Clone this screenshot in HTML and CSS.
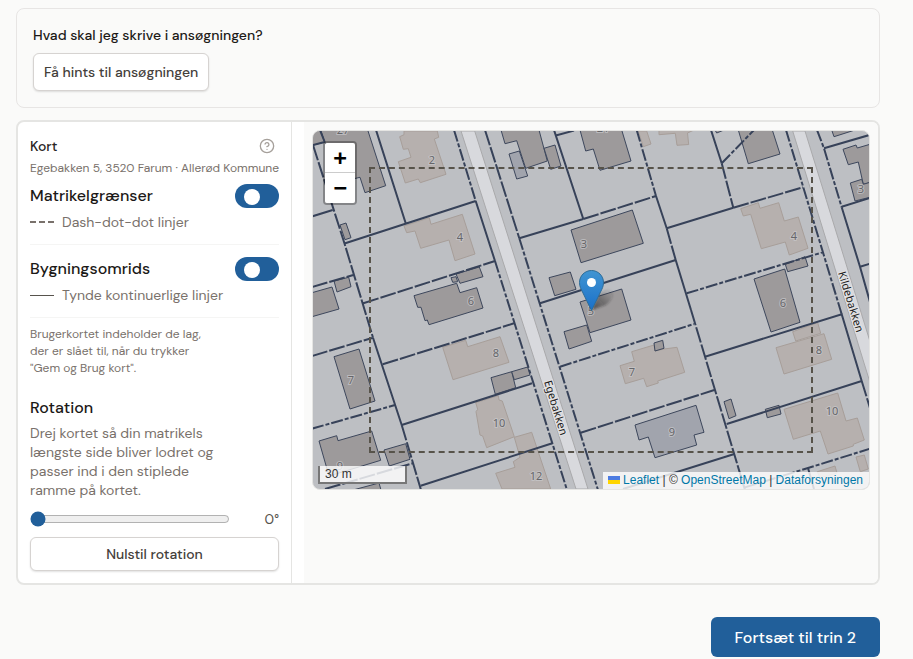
FILE: index.html
```html
<!DOCTYPE html>
<html lang="da">
<head>
<meta charset="utf-8">
<meta name="viewport" content="width=device-width, initial-scale=1">
<title>Ansøgning – kort</title>
<link rel="stylesheet" href="styles.css">
</head>
<body>
<main class="page">
  <section class="card hints">
    <p class="hints-title">Hvad skal jeg skrive i ansøgningen?</p>
    <button type="button" class="btn">Få hints til ansøgningen</button>
  </section>

  <section class="card map-card">
    <div class="sidebar">
      <div class="row head">
        <h2 class="kort">Kort</h2>
        <button type="button" class="help" aria-label="Hjælp">
          <svg viewBox="0 0 24 24" width="16" height="16" fill="none" stroke="currentColor" stroke-width="2" stroke-linecap="round" stroke-linejoin="round"><circle cx="12" cy="12" r="10"/><path d="M9.09 9a3 3 0 0 1 5.83 1c0 2-3 3-3 3"/><path d="M12 17h.01"/></svg>
        </button>
      </div>
      <p class="address">Egebakken 5, 3520 Farum · Allerød Kommune</p>

      <div class="layer">
        <div class="row">
          <label class="title" for="parcels">Matrikelgrænser</label>
          <input class="switch" type="checkbox" id="parcels" checked>
        </div>
        <p class="legend"><svg class="sample" width="24" height="4" viewBox="0 0 24 4"><path d="M0 2H24" stroke="#79716b" stroke-width="2" stroke-dasharray="6 3"/></svg>Dash-dot-dot linjer</p>
      </div>
      <div class="layer">
        <div class="row">
          <label class="title" for="buildings">Bygningsomrids</label>
          <input class="switch" type="checkbox" id="buildings" checked>
        </div>
        <p class="legend"><svg class="sample" width="24" height="3" viewBox="0 0 24 3"><path d="M0 1.5H24" stroke="#57534d"/></svg>Tynde kontinuerlige linjer</p>
      </div>

      <p class="note">Brugerkortet indeholder de lag, der er slået til, når du trykker "Gem og Brug kort".</p>

      <label class="title rotation" for="angle">Rotation</label>
      <p class="text">Drej kortet så din matrikels længste side bliver lodret og passer ind i den stiplede ramme på kortet.</p>
      <div class="row slider">
        <input type="range" id="angle" min="0" max="360" value="0">
        <output for="angle">0°</output>
      </div>
      <button type="button" class="btn wide">Nulstil rotation</button>
    </div>

    <div class="map-pane">
      <div class="map">
        <svg class="tiles" viewBox="313 131 557 358" preserveAspectRatio="xMinYMid slice">
          <g class="road">
            <path d="M461 131H474.7L588 489H576Z"/>
            <path d="M792.7 131H805L872 348V389Z"/>
          </g>
          <g class="plain">
            <path d="M404 131H437.3L438.7 137.3 434.3 139 446 174.3 420.3 182.7 418.3 179 405.3 183 398.3 161.7 411 157.3 408.3 148.7 403.3 149.3 399.7 136.7 404 134.7Z"/>
            <path d="M404 226L429.3 217.7 431 224.3 462.3 214.3 475 254 455 260.7 449 240 420.7 248.3 415 231 406.7 232.7Z"/>
            <path d="M442.7 347.3L465.7 340.3 467.7 346.7 500 336.7 509 362.3 453 379.7Z"/>
            <path d="M475.7 402.7L498.3 395.7 499 400 502.3 401 514.3 436.7 486.7 447.7 482.7 436 480 435 476 411.7 477.7 409.3Z"/>
            <path d="M514.3 437.3L531.7 432.3 550.7 489H502L495.7 473.3 515 467.3 513.3 461.7 520 457.3Z"/>
            <path d="M620 365.7L634.3 361.3 631.7 351.7 654 345 655 351 664 349 677 347.3 684.7 372.3 657.7 381 658.3 383 646.7 386.7 643.7 378.3 625.3 383.7Z"/>
            <path d="M638.3 131H646.7L651 144 643.3 146.7Z"/>
            <path d="M659 130V134.7L675.3 133.3 677 145.3 688.7 144.5 687.5 133 694 130Z"/>
            <path d="M740.7 208.7L758.3 202.7 760 208.3 778.7 202.7 784.3 221 798.3 217 808 248.3 789.3 255 785.3 242 761.3 248.7 750.7 214.3 743.3 216Z"/>
            <path d="M792.7 331.7L817.7 322.7 820.7 333.3 795.7 341Z"/>
            <path d="M776 347.7L824 333.7 831.7 359.3 784 374Z"/>
            <path d="M784 409.3L837.7 393 846 421 857.3 418 864.3 440 853.3 444.3V446L828 454 820.3 431 793.3 439.3Z"/>
            <path d="M856 457L864.3 455 868.3 469 860.3 471.7Z"/>
            <path d="M817.3 471.7L835 466 837 473 820 478Z"/>
          </g>
          <g class="outlined">
            <path d="M320.7 130H367.7L385.7 185.7 365 192.7 360 177.3 355 178.5 345 170 324.7 142Z"/>
            <path d="M312 130H320L324.7 142 312 145.5Z"/>
            <path d="M340 225L346 223 351 237.7 345 239.7Z"/>
            <path d="M334 281L348.7 277.3 351 286.7 337 292Z"/>
            <path d="M312 292.7L332 287 339 309 312 316.7Z"/>
            <path d="M414 295.7L456.7 283.3 460 292.7 476.7 287.7 483 308 429 324.7 427.3 320 425 320.7 421 307.3H417.7Z"/>
            <path d="M456 274L479.3 267 483 276.7 460 283.3Z"/>
            <path d="M451 277.7L456 276.7 457.7 281.7 452.7 282.3Z"/>
            <path d="M334 356.7L359 349 375 401 350 409Z"/>
            <path d="M319 441L336.7 435.7 338 440.7 371.7 431 380.7 460.3 329 476Z"/>
            <path d="M384 450L405.7 443.7 410 459.3 389.3 466Z"/>
            <path d="M353 490L379 483 381 490Z"/>
            <path d="M491 377.7L511.7 371.7 515.7 387.7 495.3 394.3Z"/>
            <path d="M511.7 371.7L527.7 367 530 375 514.3 379.7Z"/>
            <path d="M501 130H539L547.3 161 525.7 168.3 516.7 140.7 505 143.7Z"/>
            <path class="blue" d="M509 154L519.3 151 527.7 176 516.7 179Z"/>
            <path d="M544 148.3L555 145 561 166 550.7 169.3Z"/>
            <path d="M580 130H621.7L631 161 600 170.3 593.3 149 585.7 151Z"/>
            <path d="M571 230L632.3 210 643.3 243.3 581 262.7Z"/>
            <path d="M549 277.7L570.3 272 576 289.3 554.7 295.7Z"/>
            <path d="M580 302L621.7 289 631 320 590 332.7Z"/>
            <path d="M564 331.7L586.7 325 591.7 341.3 569 349Z"/>
            <path d="M654 343L662.7 340.3 664 348.3 655 351Z"/>
            <path class="blue" d="M635 425L696 405.3 704 432.3 694 435 696.7 445 655 457.7 648.3 437 639 440Z"/>
            <path d="M738.3 130H772.3L780 154 748.3 163.7Z"/>
            <path d="M715 130L716.7 133 724 130Z"/>
            <path d="M831.7 130L834 136.7 855 130Z"/>
            <path d="M843 149.3L856 145 857.3 148 871 144V182.3L863.3 184.3 858.3 162 848.3 164.7Z"/>
            <path d="M850.3 183L861.7 179.3 863.3 184.3 871 182V197L855 201Z"/>
            <path d="M785.3 264.3L805 256.7 808 266 787.7 271.7Z"/>
            <path d="M754 279L784.7 269 800 322.3 771 332Z"/>
            <path d="M724 401.7L731 399 736 415.7 729 418.7Z"/>
            <path d="M765.3 409.3L779 405.3 781 414 767.3 417.7Z"/>
          </g>
          <g class="parcel">
            <path d="M320 130L324.7 142M313 145L324.7 142M344.5 243.5L475.7 201M376 130L405.7 223.3M312 216.4L332.7 210M475.7 201L495 261M519.3 238.3L583.3 219M554 130L583.3 219M556.7 135.3L574 130.6M540 303.3L675.7 260M656 196L666.7 228.3M666.7 228.3L733.3 207.7M675.7 260L691 310M705 356.7L841.7 314.3L861.7 381M726.7 424L861.7 381M711 130L721.7 163.3M824 148.3L871 134.5M841.7 206.7L871 197.7M860 266.7L871 263.4M841.7 207.3L860 266.7M401.7 425L532 383.3M420.7 485.7L552.3 443.3M373 337.7L401.7 425M623 489L734.3 454M808 468L814 489M860 266.7L870 302"/>
            <path class="long" d="M313 145L344.5 243.5L373 337.7M401.7 425L421 490M312 287L353.3 275M363.3 303.3L495 261M312 356L373 337.7M382.7 364.3L514 323.3M325 489L412.7 463.3M583.3 219L656 196M666.7 228.3L675.7 260M580.7 432.7L714.3 390M691 310L745 490M733.3 207.7L803 187.3M721.7 163.3L733.3 207.7M861.7 381L870 408M485 130L519.3 238.3"/>
            <path class="dot" d="M454 130L475.7 201M495 261L567 490M519.3 238.3L598 490M636.7 130L656 196M560 366.7L694 324M312 428.7L395 405M721.7 163.3L754 130M786 130L803.3 187.3L841.7 314.3M686.7 293.3L822.7 252.3M817 130L824 148.3L841.7 207.3M871 448.4L808 468L743 488"/>
          </g>
          <g class="number">
            <text x="343" y="134">27</text>
            <text x="432" y="164">2</text><text x="460" y="241">4</text><text x="471" y="305">6</text>
            <text x="496" y="357">8</text><text x="351" y="384">7</text><text x="340" y="470">9</text>
            <text x="499" y="427">10</text><text x="536" y="480">12</text><text x="584" y="248">3</text>
            <text x="591" y="315">5</text><text x="632" y="376">7</text><text x="672" y="436">9</text>
            <text x="794" y="240">4</text><text x="783" y="307">6</text><text x="819" y="354">8</text>
            <text x="832" y="415">10</text><text x="861" y="193">3</text><text x="603" y="132">21</text>
          </g>
          <g class="street">
            <text transform="translate(555 408) rotate(73)">Egebakken</text>
            <text transform="translate(850 302) rotate(73)">Kildebakken</text>
          </g>
        </svg>

        <div class="frame"></div>

        <svg class="marker" viewBox="0 0 41 41" width="41" height="41">
          <defs>
            <linearGradient id="pin" x1="0" y1="0" x2="0" y2="1"><stop offset="0" stop-color="#4195d2"/><stop offset="1" stop-color="#1a70c9"/></linearGradient>
            <linearGradient id="shade" x1="0" y1="1" x2="1" y2="0"><stop offset="0" stop-color="#222" stop-opacity=".65"/><stop offset="1" stop-color="#222" stop-opacity="0"/></linearGradient>
            <filter id="soft" x="-30%" y="-30%" width="160%" height="160%"><feGaussianBlur stdDeviation="1.3"/></filter>
          </defs>
          <path d="M12.500 40L20 24Q29 17 34 21Q36 28 27 35Z" fill="url(#shade)" filter="url(#soft)"/>
          <path d="M12.500 .5C5.800 .5 .5 5.900 .5 12.500C.5 16.500 2 19 3.500 22L12.500 40.500L21.500 22C23 19 24.500 16.500 24.500 12.500C24.500 5.900 19.200 .5 12.500 .5Z" fill="url(#pin)" stroke="#2e6c97"/>
          <circle cx="12.500" cy="12.500" r="4.500" fill="#fff"/>
        </svg>

        <div class="zoom">
          <button type="button" aria-label="Zoom ind">+</button>
          <button type="button" aria-label="Zoom ud">−</button>
        </div>
        <div class="scale">30 m</div>
        <div class="credits"><a href="#leaflet"><svg width="12" height="8" viewBox="0 0 12 8"><path fill="#4c7be1" d="M0 0h12v4H0z"/><path fill="#ffd500" d="M0 4h12v4H0z"/></svg> Leaflet</a> | © <a href="#osm">OpenStreetMap</a> | <a href="#data">Dataforsyningen</a></div>
      </div>
    </div>
  </section>

  <div class="actions">
    <button type="button" class="primary">Fortsæt til trin 2</button>
  </div>
</main>
</body>
</html>
```
FILE: styles.css
```css
* { box-sizing: border-box; }
body {
  margin: 0;
  background: #fafaf9;
  color: #1c1917;
  font-family: "DM Sans", Inter, sans-serif;
  font-size: 14px;
}
p, h2 { margin: 0; }
button { font-family: inherit; cursor: pointer; }

.page { padding: 8px 33px 2px 16px; }
.card { border: 1px solid #e7e5e4; border-radius: 8px; }

.hints { padding: 16px; }
.hints-title { line-height: 20px; margin-bottom: 8px; font-weight: 500; }

.btn {
  height: 38px;
  padding: 0 10px;
  border: 1px solid #d6d3d1;
  border-radius: 6px;
  background: #fff;
  color: #44403b;
  font-size: 14px;
  font-weight: 500;
  box-shadow: 0 1px 2px rgba(0, 0, 0, .12);
}
.btn.wide { width: 100%; height: 34px; }

.map-card {
  display: flex;
  margin-top: 12px;
  border-width: 2px;
  border-color: #e5e5e3;
  background: #fff;
  overflow: hidden;
}
.sidebar {
  flex: 0 0 274px;
  padding: 12px;
  border-right: 1px solid #e5e5e3;
}
.row { display: flex; align-items: center; justify-content: space-between; }
.head { height: 24px; }
.kort { font-size: 14px; font-weight: 500; color: #292524; }
.help {
  display: flex;
  width: 24px;
  height: 24px;
  padding: 0;
  border: 0;
  background: none;
  color: #a6a09b;
  align-items: center;
  justify-content: center;
}
.address { margin-bottom: 6px; font-size: 12px; line-height: 20px; color: #79716b; white-space: nowrap; }

.layer { height: 61px; margin-bottom: 12px; border-bottom: 1px solid #f5f5f4; }
.title { font-size: 16px; line-height: 24px; font-weight: 500; }
.switch {
  appearance: none;
  width: 44px;
  height: 24px;
  margin: 0;
  padding: 5px 9px;
  border-radius: 12px;
  background: #215f9a;
}
.switch::before {
  content: "";
  display: block;
  width: 16px;
  height: 16px;
  border-radius: 50%;
  background: #fff;
}
.legend { display: flex; align-items: center; gap: 8px; line-height: 20px; padding-top: 4px; color: #79716b; }

.note { max-width: 184px; margin: -4px 0 19px; font-size: 12px; line-height: 17px; color: #79716b; }
.rotation { display: block; }
.text { max-width: 196px; margin: 4px 0; line-height: 19px; color: #79716b; }
.slider { height: 30px; margin-bottom: 3px; }
.slider input { width: 200px; margin: 0; accent-color: #215f9a; }
.slider output { color: #57534d; }

.map-pane { flex: 1; margin-left: 12px; padding: 8px; background: #fafaf9; }
.map {
  position: relative;
  height: 360px;
  border: 1px solid #e5e5e3;
  border-radius: 8px;
  overflow: hidden;
  background: #bdbfc3;
}
.tiles { display: block; width: 100%; height: 100%; }
.road path { fill: #d8d9dd; stroke: #a9a9ab; }
.plain path { fill: #b6b0ae; stroke: #a79e99; stroke-width: 1; }
.outlined path { fill: #9d9a9b; stroke: #3d475c; stroke-width: 1; }
.outlined .blue { fill: #a1a4ad; }
.parcel path { fill: none; stroke: #374259; stroke-width: 2; }
.parcel .long { stroke-dasharray: 16 2; }
.parcel .dot { stroke-dasharray: 12 2 4 2; }
.number text {
  font: 11px "Noto Sans", sans-serif;
  text-anchor: middle;
  fill: #66666a;
  stroke: #c9c9cc;
  stroke-width: 2;
  stroke-opacity: .7;
  paint-order: stroke;
}
.street text {
  font: 11px "Noto Sans", sans-serif;
  text-anchor: middle;
  dominant-baseline: middle;
  fill: #1b1b1b;
  stroke: #e3e3e5;
  stroke-width: 2;
  paint-order: stroke;
}
.frame { position: absolute; inset: 10%; border: 2px dashed #57534a; }
.marker { position: absolute; left: 50%; top: 50%; margin: -40px 0 0 -12px; overflow: visible; }

.zoom {
  position: absolute;
  left: 10px;
  top: 10px;
  border: 2px solid rgba(0, 0, 0, .3);
  border-radius: 4px;
  background-clip: padding-box;
}
.zoom button {
  display: block;
  width: 30px;
  height: 30px;
  padding: 0;
  border: 0;
  background: #fff;
  color: #000;
  font: bold 22px/30px "DejaVu Sans Mono", monospace;
}
.zoom button:first-child { border-bottom: 1px solid #ccc; border-radius: 2px 2px 0 0; }
.zoom button:last-child { border-radius: 0 0 2px 2px; }
.scale {
  position: absolute;
  left: 5px;
  bottom: 5px;
  width: 89px;
  height: 18px;
  padding: 0 5px;
  border: 2px solid #777;
  border-top: 0;
  background: rgba(255, 255, 255, .8);
  color: #333;
  font: 12px/16px "Liberation Sans", sans-serif;
}
.credits {
  position: absolute;
  right: 0;
  bottom: 0;
  padding: 0 6px 0 5px;
  background: rgba(255, 255, 255, .8);
  color: #333;
  font: 12px/17px "Liberation Sans", sans-serif;
  white-space: nowrap;
}
.credits a { color: #0078a8; text-decoration: none; }

.actions { display: flex; justify-content: flex-end; margin-top: 32px; }
.primary {
  height: 40px;
  padding: 0 24px;
  border: 0;
  border-radius: 6px;
  background: #215f9a;
  color: #fff;
  font-size: 16px;
  font-weight: 500;
}
```
